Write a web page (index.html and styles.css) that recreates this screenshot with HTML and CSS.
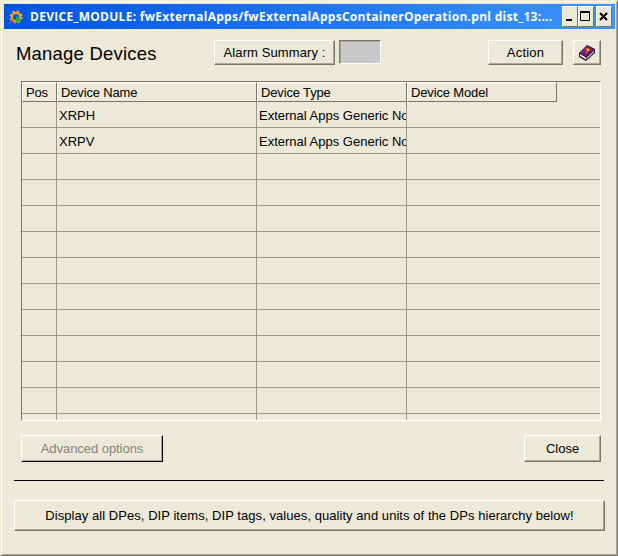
FILE: index.html
```html
<!DOCTYPE html>
<html lang="en">
<head>
<meta charset="utf-8">
<title>Manage Devices</title>
<link rel="stylesheet" href="styles.css">
</head>
<body>
<div class="window">
  <header class="titlebar">
    <svg class="app-icon" width="14" height="14" viewBox="0 0 14 14">
      <circle cx="7" cy="7" r="5.4" fill="none" stroke="#f8a51f" stroke-width="2.4" stroke-dasharray="2.5 1.74"/>
      <circle cx="7" cy="7" r="3.9" fill="none" stroke="#f5a32a" stroke-width="1.8"/>
      <path d="M1.8 9.5A5.5 5.5 0 0 0 6 12.5" fill="none" stroke="#c56045" stroke-width="2"/>
      <path d="M7 6v7.500L13.500 9.500Z" fill="#35a935"/>
    </svg>
    <span class="caption">DEVICE_MODULE: fwExternalApps/fwExternalAppsContainerOperation.pnl dist_13:...</span>
    <div class="controls">
      <button class="ctl" aria-label="Minimize"><svg width="13" height="19"><path d="M3 12h6v2H3z"/></svg></button>
      <button class="ctl" aria-label="Maximize"><svg width="13" height="19"><path d="M1.500 5v8.500h9V5" fill="none" stroke="#000"/><path d="M1 4h10v2H1z"/></svg></button>
      <button class="ctl last" aria-label="Close"><svg width="13" height="19"><path d="M3 6l7 7M10 6l-7 7" fill="none" stroke="#000" stroke-width="2"/></svg></button>
    </div>
  </header>
  <main>
    <div class="toolbar">
      <h1>Manage Devices</h1>
      <button class="btn alarm">Alarm Summary :</button>
      <div class="status"></div>
      <button class="btn action">Action</button>
      <button class="btn help" aria-label="Help"><svg width="18" height="18" viewBox="0 0 18 18">
        <path d="M1 9L9 1l8 4v4l-9 8-7-4Z" fill="#211128"/>
        <path d="M2 9L9 2l7 3.500-8 7Z" fill="#7b1b72"/>
        <path d="M2 10l6 3.500v2L2 12Z" fill="#f3eff8"/>
        <path d="M8.500 13.500L16 6.500v2l-7.500 7Z" fill="#b8b0c8"/>
        <path d="M3 8.500L9 2.500" stroke="#a32d7d"/>
        <path d="M8 5.500l2-.5 1 1-2 1.500M7.500 8.500h1" fill="none" stroke="#ffae22" stroke-width="1.300"/>
      </svg></button>
    </div>
    <div class="table">
      <div class="row head"><div>Pos</div><div>Device Name</div><div>Device Type</div><div>Device Model</div></div>
      <div class="row"><div></div><div>XRPH</div><div>External Apps Generic Node</div><div></div></div>
      <div class="row"><div></div><div>XRPV</div><div>External Apps Generic Node</div><div></div></div>
      <div class="row"><div></div><div></div><div></div><div></div></div>
      <div class="row"><div></div><div></div><div></div><div></div></div>
      <div class="row"><div></div><div></div><div></div><div></div></div>
      <div class="row"><div></div><div></div><div></div><div></div></div>
      <div class="row"><div></div><div></div><div></div><div></div></div>
      <div class="row"><div></div><div></div><div></div><div></div></div>
      <div class="row"><div></div><div></div><div></div><div></div></div>
      <div class="row"><div></div><div></div><div></div><div></div></div>
      <div class="row"><div></div><div></div><div></div><div></div></div>
      <div class="row"><div></div><div></div><div></div><div></div></div>
      <div class="row"><div></div><div></div><div></div><div></div></div>
    </div>
    <div class="actions">
      <button class="btn advanced" disabled>Advanced options</button>
      <button class="btn close">Close</button>
    </div>
    <hr>
    <button class="btn display">Display all DPes, DIP items, DIP tags, values, quality and units of the DPs hierarchy below!</button>
  </main>
</div>
</body>
</html>
```

FILE: styles.css
```css
* { box-sizing: border-box; }
body {
  margin: 0;
  overflow: hidden;
  background: #ece9d8;
  font: 13px/16px "Liberation Sans", sans-serif;
  color: #000;
}
.window {
  width: 618px;
  height: 556px;
  padding: 2px 1px 0 2px;
  border: 1px solid #ece9d8;
  border-width: 1px 1px 1px 1px;
  border-right-color: #77746a;
  border-bottom-color: #77746a;
  box-shadow: inset 1px 1px #fff, inset -1px -1px #aca899;
}
.titlebar {
  display: flex;
  align-items: center;
  height: 25px;
  margin: 1px 1px 0;
  padding-left: 5px;
  background: linear-gradient(90deg, #0054e3, #3d95ff);
}
.app-icon { margin-right: 7px; flex: none; }
.caption {
  flex: 1;
  white-space: nowrap;
  color: #fff;
  font: bold 12px/16px "Open Sans", sans-serif;
  letter-spacing: 0.28px;
}
.controls { display: flex; flex: none; margin-right: 3px; }
.ctl {
  width: 16px;
  height: 21px;
  padding: 0;
  border: 1px solid;
  border-color: #fff #77746a #77746a #fff;
  background: #ece9d8;
}
.ctl svg { display: block; }
.last { margin-left: 2px; }
.toolbar {
  display: flex;
  height: 26px;
  margin: 11px 0 15px 13px;
}
h1 {
  width: 198px;
  margin: 0;
  font-size: 18.500px;
  font-weight: normal;
  line-height: 28px;
  letter-spacing: .2px;
}
.btn {
  padding: 0;
  border: 1px solid;
  border-color: #fff #77746a #77746a #fff;
  box-shadow: inset -1px -1px #aca899;
  background: #ece9d8;
  color: #000;
  font: inherit;
  white-space: nowrap;
}
.alarm { width: 121px; height: 25px; letter-spacing: .1px; }
.status {
  width: 42px;
  height: 24px;
  margin-left: 4px;
  border: 1px solid;
  border-color: #77746a #fff #fff #77746a;
  box-shadow: inset 1px 1px #aca899;
  background: #c8c8c8;
}
.action { width: 75px; height: 25px; margin-left: 107px; letter-spacing: .2px; }
.help { width: 28px; height: 25px; margin-left: 10px; }
.help svg { display: block; margin: auto; }
.table {
  width: 580px;
  height: 340px;
  margin-left: 18px;
  overflow: hidden;
  border: 1px solid;
  border-color: #77746a #fff #fff #77746a;
}
.row {
  display: grid;
  grid-template-columns: 35px 200px 150px 1fr;
  height: 26px;
  border-bottom: 1px solid #9c998a;
  line-height: 27px;
}
.row > div {
  overflow: hidden;
  padding-left: 2px;
  border-right: 1px solid #9c998a;
  white-space: nowrap;
}
.row > div:last-child { border-right: 0; }
.head {
  grid-template-columns: 35px 200px 150px 150px;
  height: 20px;
  border: 0;
  line-height: 19px;
}
.head > div, .head > div:last-child {
  padding-left: 3px;
  border: 1px solid;
  border-color: #fff #77746a #77746a #fff;
  letter-spacing: -.15px;
}
.actions {
  display: flex;
  justify-content: space-between;
  width: 580px;
  margin: 14px 0 18px 18px;
}
.advanced {
  width: 142px;
  height: 27px;
  border-right-color: #000;
  border-bottom-color: #000;
  color: #858278;
  letter-spacing: -.05px;
}
.close { width: 77px; height: 27px; }
hr {
  width: 590px;
  height: 1px;
  margin: 0 0 19px 11px;
  border: 0;
  background: #000;
}
.display {
  display: block;
  width: 591px;
  height: 31px;
  margin-left: 11px;
  letter-spacing: .055px;
}
```
